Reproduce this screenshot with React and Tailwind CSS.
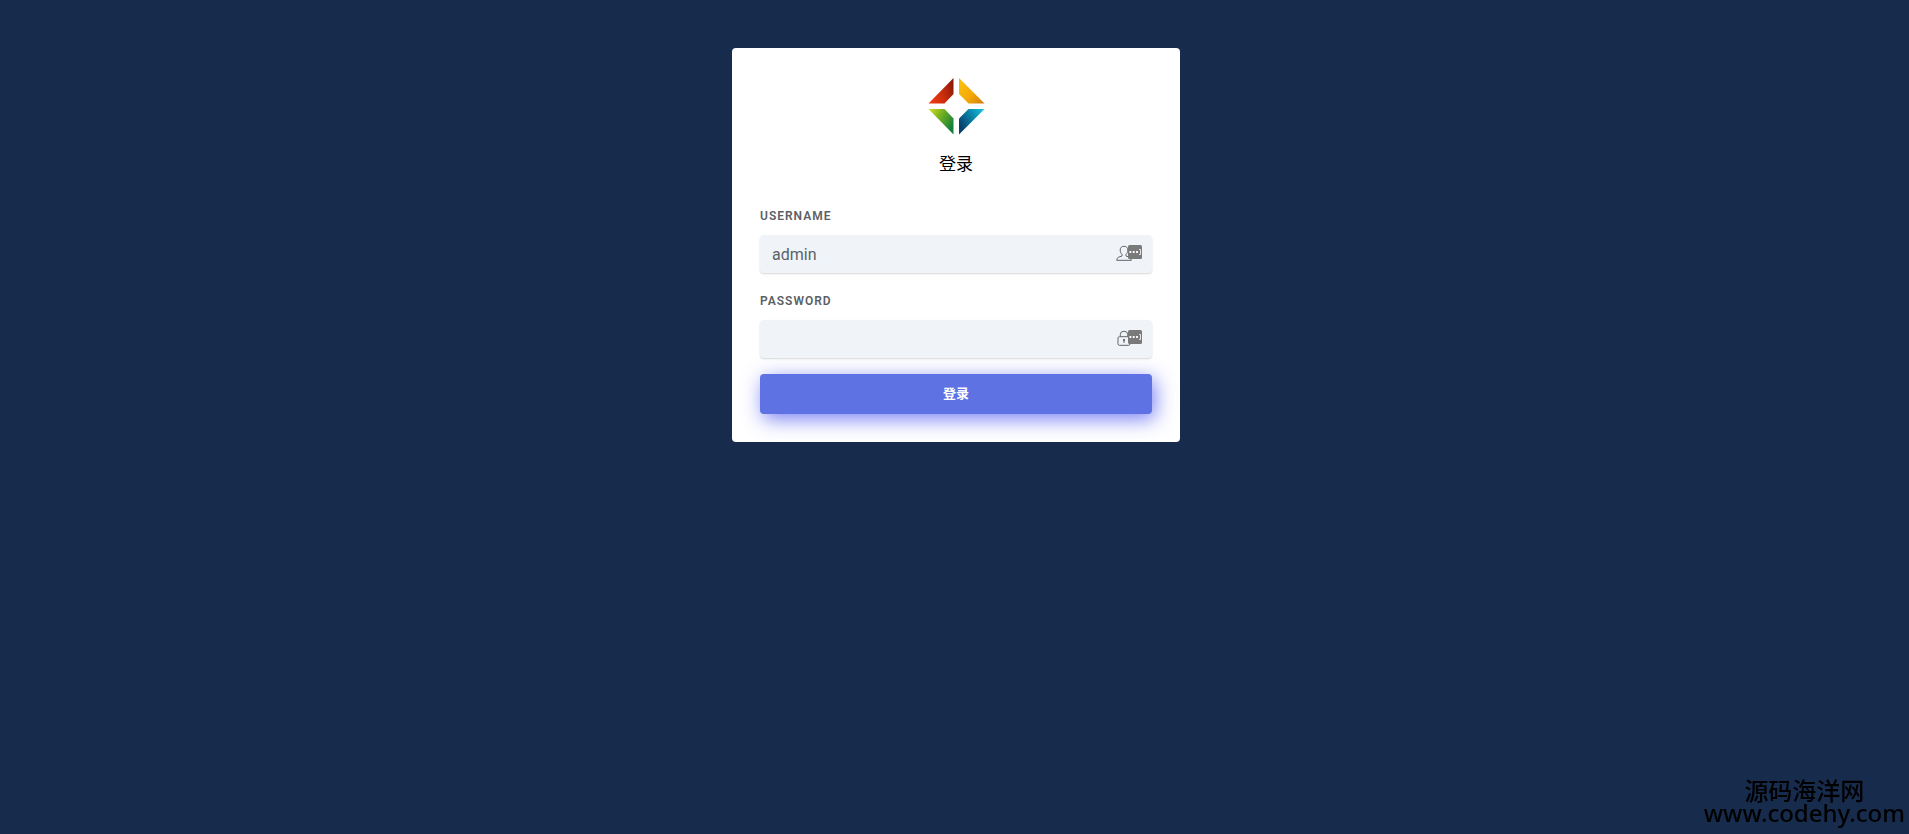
import React, { useState } from "react";

function Logo() {
  return (
    <svg viewBox="0 0 60 60" className="size-15" role="img" aria-label="Logo">
      <defs>
        <linearGradient id="red" x1="0" y1="0.6" x2="1" y2="0.3">
          <stop offset="0" stopColor="#ee3d10" />
          <stop offset="0.55" stopColor="#c92c0c" />
          <stop offset="1" stopColor="#8a1a08" />
        </linearGradient>
        <linearGradient id="orange" x1="0" y1="0.3" x2="1" y2="1">
          <stop offset="0" stopColor="#fbbd0c" />
          <stop offset="0.5" stopColor="#f3a808" />
          <stop offset="1" stopColor="#cf7a0c" />
        </linearGradient>
        <linearGradient id="green" x1="0" y1="0" x2="1" y2="0.6">
          <stop offset="0" stopColor="#dbe021" />
          <stop offset="0.5" stopColor="#6fae22" />
          <stop offset="1" stopColor="#15803a" />
        </linearGradient>
        <linearGradient id="blue" x1="0" y1="0.6" x2="1" y2="0">
          <stop offset="0" stopColor="#083f6b" />
          <stop offset="0.5" stopColor="#0a83a8" />
          <stop offset="1" stopColor="#1cc6e4" />
        </linearGradient>
      </defs>
      <path d="M27.500 2V18L18.500 27.500H2.500Z" fill="url(#red)" />
      <path d="M33 2V18L42.500 27.500H58.500Z" fill="url(#orange)" />
      <path d="M27.500 58.500V42.500L18.500 33H2.500Z" fill="url(#green)" />
      <path d="M33 58.500V42.500L42.500 33H58.500Z" fill="url(#blue)" />
    </svg>
  );
}

function UserIcon() {
  return (
    <svg viewBox="0 0 16 16" className="size-4" fill="none" stroke="#5f6468" strokeWidth="1" aria-hidden="true">
      <path d="M6 9.400C4.700 8.300 4.200 6.800 4.200 5C4.200 2.600 5.700 1.300 8 1.300S11.800 2.600 11.800 5C11.800 6.800 11.300 8.300 10 9.400V11L13.600 12.300Q15.300 13 15.300 15.300H.7Q.7 13 2.400 12.300L6 11Z" />
    </svg>
  );
}

function LockIcon() {
  return (
    <svg viewBox="0 0 16 16" className="size-4" fill="none" stroke="#5f6468" strokeWidth="1" aria-hidden="true">
      <rect x="2" y="6.700" width="12" height="8.600" rx="1.500" />
      <path d="M4.300 6.500V4.300Q4.500 1.200 8 1.200T11.700 4.300V6.500" />
      <circle cx="8" cy="10" r="0.700" fill="#5f6468" />
      <path d="M8 10V13" />
    </svg>
  );
}

function KeyBadge() {
  return (
    <svg viewBox="0 0 14 14" className="size-3.5" aria-hidden="true">
      <rect width="14" height="14" rx="1.500" fill="#7a7a7a" />
      <rect x="1.500" y="6" width="1.800" height="2" fill="#fff" />
      <rect x="4.800" y="6" width="1.800" height="2" fill="#fff" />
      <rect x="8.100" y="6" width="1.800" height="2" fill="#fff" />
      <path d="M11 4.500H12.500V9.500H11" fill="none" stroke="#fff" strokeWidth="0.800" />
    </svg>
  );
}

function Field({ id, label, type, value, onChange, icon }) {
  return (
    <div className="mb-4">
      <label htmlFor={id} className="mb-1.5 block text-xs leading-[25px] font-semibold tracking-[1px] text-[#5b6064] uppercase">
        {label}
      </label>
      <div className="relative">
        <input
          id={id}
          type={type}
          value={value}
          onChange={onChange}
          className="block h-[38px] w-full rounded bg-[#f0f4f8] pr-14 pl-3 text-base text-[#5b6268] shadow-[0_1px_2px_rgba(0,0,0,0.16)] outline-none"
        />
        <span className="pointer-events-none absolute top-2.5 right-2.5 flex items-start">
          <span className="-mr-1">{icon}</span>
          <KeyBadge />
        </span>
      </div>
    </div>
  );
}

export default function App() {
  const [username, setUsername] = useState("admin");
  const [password, setPassword] = useState("");

  return (
    <div className="min-h-screen bg-[#172b4d] py-12 pr-4 pl-[19px] font-[Roboto,'Noto_Sans_CJK_SC',sans-serif]">
      <main className="mx-auto w-full max-w-md rounded bg-white p-7">
        <div className="flex flex-col items-center">
          <Logo />
          <h1 className="mt-4 mb-7 text-[17px] leading-6 font-normal text-black">登录</h1>
        </div>
        <form onSubmit={(e) => e.preventDefault()}>
          <Field id="username" label="Username" type="text" value={username} onChange={(e) => setUsername(e.target.value)} icon={<UserIcon />} />
          <Field id="password" label="Password" type="password" value={password} onChange={(e) => setPassword(e.target.value)} icon={<LockIcon />} />
          <button type="submit" className="block h-10 w-full rounded bg-[#5e72e4] text-[13px] font-bold text-white shadow-[3px_5px_20px_rgba(75,85,240,0.75)]">
            登录
          </button>
        </form>
      </main>
      <div className="fixed right-1 bottom-[11px] text-center font-['Noto_Sans','Noto_Sans_CJK_SC',sans-serif] text-2xl font-medium text-black">
        <p className="leading-6">源码海洋网</p>
        <p className="leading-5">www.codehy.com</p>
      </div>
    </div>
  );
}
